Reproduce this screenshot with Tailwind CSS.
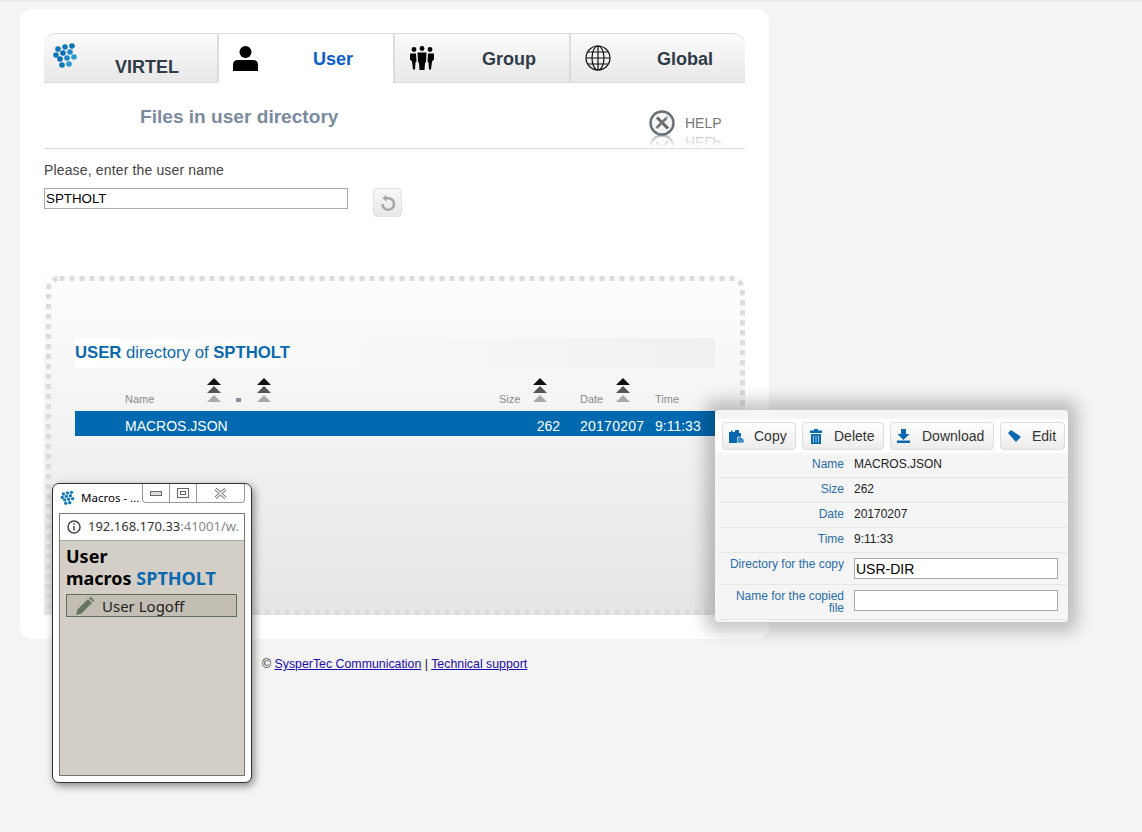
<!DOCTYPE html>
<html lang="en">

<head>
  <meta charset="UTF-8">
  <title>Files in user directory</title>
  <script src="https://cdn.jsdelivr.net/npm/@tailwindcss/browser@4"></script>
</head>

<body class="relative h-[832px] w-[1142px] overflow-hidden bg-[#f4f4f4] font-['Liberation_Sans',sans-serif] text-[#333]">
  <div class="h-[2px] bg-[#ececec]"></div>

  <!-- Main card -->
  <main class="ml-[20px] mt-[7px] h-[630px] w-[749px] rounded-[12px] bg-white px-[24px] pt-[24px]">
    <!-- Tabs -->
    <nav class="flex h-[50px] w-[701px] text-[18px] font-bold leading-[20px] text-[#2f3b47]">
      <div class="flex w-[175px] rounded-tl-[12px] border-t border-r-2 border-b border-[#dcdcdc] bg-gradient-to-b from-[#fbfbfb] to-[#e8e8e8] pl-[8px]">
        <svg class="mt-[8px] h-[26px] w-[26px] blur-[0.5px]" viewBox="0 0 26 26">
          <circle cx="6" cy="7" r="2.800" fill="#0f76b8"/><circle cx="13" cy="5" r="2.800" fill="#0f76b8"/><circle cx="20" cy="4" r="2.800" fill="#0f76b8"/>
          <circle cx="4" cy="13" r="2.800" fill="#0f76b8"/><circle cx="11" cy="11" r="2.800" fill="#0a6cb5"/><circle cx="18" cy="10" r="2.800" fill="#1c86c8"/>
          <circle cx="8" cy="17" r="2.800" fill="#0a6cb5"/><circle cx="15" cy="16" r="2.800" fill="#1c86c8"/><circle cx="22" cy="15" r="2.800" fill="#2a9ad6"/>
          <circle cx="10" cy="23" r="2.800" fill="#0f76b8"/><circle cx="17" cy="22" r="2.800" fill="#2a9ad6"/>
        </svg>
        <span class="ml-[37px] mt-[23px]">VIRTEL</span>
      </div>
      <div class="flex w-[174px] border-t border-[#dcdcdc] bg-white pl-[14px]">
        <svg class="mt-[12px] h-[25px] w-[25px]" viewBox="0 0 25 25" fill="#000">
          <circle cx="12.500" cy="6" r="6"/><path d="M0 25v-6q0-5 5-5h15q5 0 5 5v6z"/>
        </svg>
        <span class="ml-[55px] mt-[15px] text-[#0b5ec9]">User</span>
      </div>
      <div class="flex w-[178px] border-t border-l-2 border-r-2 border-b border-[#dcdcdc] bg-gradient-to-b from-[#fbfbfb] to-[#e8e8e8] pl-[15px]">
        <svg class="mt-[12px] h-[24px] w-[24px]" viewBox="0 0 24 24" fill="#000">
          <circle cx="4" cy="3.500" r="2.400"/><circle cx="12" cy="2.500" r="2.400"/><circle cx="20" cy="3.500" r="2.400"/>
          <path d="M0 7.500h6l.5 8-1 1-.5 7H3l-1-8-2-2z"/><path d="M24 7.500h-6l-.5 8 1 1 .5 7h2l1-8 2-2z"/>
          <path d="M7.500 6.500h9l-.5 9-1 2-.5 6.500h-5L9 17.500l-1-2z"/>
        </svg>
        <span class="ml-[48px] mt-[15px]">Group</span>
      </div>
      <div class="flex w-[174px] rounded-tr-[12px] border-t border-b border-[#dcdcdc] bg-gradient-to-b from-[#fbfbfb] to-[#e8e8e8] pl-[14px]">
        <svg class="mt-[11px] h-[26px] w-[26px]" viewBox="0 0 26 26" fill="none" stroke="#111" stroke-width="1.200">
          <circle cx="13" cy="13" r="12"/><ellipse cx="13" cy="13" rx="6" ry="12"/>
          <path d="M13 1v24M1 13h24M3 7h20M3 19h20"/>
        </svg>
        <span class="ml-[46px] mt-[15px]">Global</span>
      </div>
    </nav>

    <!-- Heading -->
    <header class="relative flex h-[66px] w-[701px] border-b border-[#dcdcdc] pl-[96px]">
      <h1 class="mt-[22px] text-[19.1px] font-bold leading-[24px] text-[#7a8b9e]">Files in user directory</h1>
      <a class="absolute left-[605px] top-[27px] flex h-[26px] items-center text-[14px] text-[#777]">
        <svg class="h-[26px] w-[26px]" viewBox="0 0 26 26" fill="none">
          <circle cx="13" cy="13" r="11.500" fill="#f4f4f4" stroke="#666e76" stroke-width="2.400"/>
          <path d="M8 7.500l11 11" stroke="#666" stroke-width="3"/><path d="M18.500 7L7.500 18" stroke="#777" stroke-width="2.600"/><path d="M15.500 5.500l5 5" stroke="#fff" stroke-width="1"/>
        </svg>
        <span class="ml-[10px]">HELP</span>
      </a>
      <div aria-hidden="true" class="absolute left-[605px] top-[51px] h-[14px] overflow-hidden opacity-50 [mask-image:linear-gradient(to_bottom,black,transparent)]">
        <div class="flex h-[26px] -scale-y-100 items-center text-[14px] text-[#777]">
          <svg class="h-[26px] w-[26px]" viewBox="0 0 26 26" fill="none">
            <circle cx="13" cy="13" r="11.500" stroke="#666e76" stroke-width="2.400"/>
            <path d="M8 7.500l11 11" stroke="#666" stroke-width="3"/><path d="M18.500 7L7.500 18" stroke="#777" stroke-width="2.600"/>
          </svg>
          <span class="ml-[10px] translate-y-[5px]">HELP</span>
        </div>
      </div>
    </header>

    <!-- User name form -->
    <p class="mt-[13px] text-[14px] leading-[16px] tracking-[0.15px] text-[#444]">Please, enter the user name</p>
    <div class="mt-[10px] flex items-start">
      <input class="h-[21px] w-[304px] border border-[#a9a9a9] bg-white px-[1px] text-[13.33px] text-black" value="SPTHOLT">
      <button class="ml-[25px] flex h-[29px] w-[29px] items-center justify-center rounded-[4px] border border-[#e2e2e2] bg-gradient-to-b from-[#f8f8f8] to-[#e8e8e8]">
        <svg class="h-[18px] w-[18px]" viewBox="0 0 18 18" fill="none" stroke="#a8a8a8" stroke-width="2.600">
          <path d="M6 4.200h3.500a5.800 5.800 0 1 1-6 5.800"/><path d="M7.500 0.500L3.500 4.200l4 3.700z" fill="#a8a8a8" stroke="none"/>
        </svg>
      </button>
    </div>

    <!-- Directory box -->
    <section class="relative mt-[59px] h-[339px] w-[701px] bg-gradient-to-b from-[#fdfdfd] to-[#e6e6e6] pl-[31px] pt-[62px]">
      <svg class="absolute left-0 top-0 h-[339px] w-[701px]" viewBox="0 0 701 339" fill="none">
        <rect x="4.500" y="2.500" width="694" height="334" rx="11" stroke="#dcdcdc" stroke-width="5" stroke-dasharray="5 5"/>
      </svg>
      <h2 class="relative h-[30px] w-[640px] bg-gradient-to-r from-white to-[#f0f0f0] text-[16.7px] leading-[29px] text-[#0a68ae]">
        <b>USER</b> directory of <b>SPTHOLT</b>
      </h2>

      <div class="relative mt-[10px] flex h-[28px] w-[640px] items-end pl-[50px] text-[11px] leading-[14px] text-[#8a8a8a]">
        <span class="w-[82px]">Name</span>
        <span class="mb-[4px] flex w-[29px] flex-col">
          <svg class="h-[24px] w-[14px]" viewBox="0 0 14 24"><path d="M7 0l7 7H0z" fill="#111"/><path d="M7 8l7 7H0z" fill="#555"/><path d="M7 17l7 7H0z" fill="#aaa"/></svg>
        </span>
        <span class="mb-[4px] w-[21px]"><span class="block h-[4px] w-[5px] bg-[#7f8ea3]"></span></span>
        <span class="mb-[4px] w-[242px]">
          <svg class="h-[24px] w-[14px]" viewBox="0 0 14 24"><path d="M7 0l7 7H0z" fill="#111"/><path d="M7 8l7 7H0z" fill="#555"/><path d="M7 17l7 7H0z" fill="#aaa"/></svg>
        </span>
        <span class="w-[34px]">Size</span>
        <span class="mb-[4px] w-[47px]">
          <svg class="h-[24px] w-[14px]" viewBox="0 0 14 24"><path d="M7 0l7 7H0z" fill="#111"/><path d="M7 8l7 7H0z" fill="#555"/><path d="M7 17l7 7H0z" fill="#aaa"/></svg>
        </span>
        <span class="w-[36px]">Date</span>
        <span class="mb-[4px] w-[39px]">
          <svg class="h-[24px] w-[14px]" viewBox="0 0 14 24"><path d="M7 0l7 7H0z" fill="#111"/><path d="M7 8l7 7H0z" fill="#555"/><path d="M7 17l7 7H0z" fill="#aaa"/></svg>
        </span>
        <span>Time</span>
      </div>

      <div class="relative mt-[5px] flex h-[25px] w-[640px] bg-[#0069b0] pl-[50px] pt-[3px] text-[14px] leading-[25px] text-white">
        <span class="w-[375px]">MACROS.JSON</span>
        <span class="w-[60px] text-right">262</span>
        <span class="ml-[20px] w-[75px] tracking-[0.25px]">20170207</span>
        <span>9:11:33</span>
      </div>
    </section>
  </main>

  <footer class="ml-[262px] mt-[18px] text-[12.35px] leading-[14px] text-[#222]">
    © <a class="text-[#1a0dab] underline">SysperTec Communication</a> | <a class="text-[#1a0dab] underline">Technical support</a>
  </footer>

  <!-- File detail panel -->
  <aside class="absolute left-[715px] top-[410px] h-[212px] w-[353px] rounded-[4px] bg-[#f5f5f5] pt-[9px] shadow-[0_0_16px_10px_rgba(0,0,0,0.22)]">
    <div class="flex h-[34px] gap-[6px] bg-white pl-[7px] pt-[3px] text-[14px] text-[#333]">
      <button class="flex h-[28px] w-[74px] items-center rounded-[4px] border border-[#dcdcdc] bg-gradient-to-b from-white to-[#ececec] pl-[6px]">
        <svg class="h-[13px] w-[15px]" viewBox="0 0 15 13">
          <path d="M0 2h2V0.500h1.500V2H6V0h4v3h2v4H9v6H0z" fill="#0a68ae"/><path d="M8.500 7H12l3 2.500V13H8.500z" fill="#3a8cc8" stroke="#fff" stroke-width=".6"/>
        </svg>
        <span class="ml-[10px] mt-[1px]">Copy</span>
      </button>
      <button class="flex h-[28px] w-[82px] items-center rounded-[4px] border border-[#dcdcdc] bg-gradient-to-b from-white to-[#ececec] pl-[7px]">
        <svg class="h-[15px] w-[12px]" viewBox="0 0 12 15" fill="#0a68ae"><path d="M0 1.500h4V0h4v1.500h4V4H0z"/><path d="M1 5h10v10H1z"/><path d="M3.500 6.500v7M6 6.500v7M8.500 6.500v7" stroke="#9cc4e2" stroke-width="1"/></svg>
        <span class="ml-[12px] mt-[1px]">Delete</span>
      </button>
      <button class="flex h-[28px] w-[104px] items-center rounded-[4px] border border-[#dcdcdc] bg-gradient-to-b from-white to-[#ececec] pl-[6px]">
        <svg class="h-[14px] w-[13px]" viewBox="0 0 13 14" fill="#0a68ae"><path d="M4 0h5v5h3.500l-6 6-6-6H4z"/><path d="M0 11.500h13V14H0z"/></svg>
        <span class="ml-[12px] mt-[1px]">Download</span>
      </button>
      <button class="flex h-[28px] w-[65px] items-center rounded-[4px] border border-[#dcdcdc] bg-gradient-to-b from-white to-[#ececec] pl-[7px]">
        <svg class="h-[12px] w-[13px]" viewBox="0 0 13 12" fill="#0a68ae"><path d="M0 3l3-3 9 6q1 1 0 2l-3 3q-1 1-2 0z"/></svg>
        <span class="ml-[11px] mt-[1px]">Edit</span>
      </button>
    </div>
    <dl class="ml-[4px] text-[12px] leading-[14px]">
      <div class="flex h-[25px] items-center border-b border-[#e6e6e6] pb-[2px]">
        <dt class="w-[125px] text-right text-[#2a6ca8]">Name</dt><dd class="ml-[10px] text-[#222]">MACROS.JSON</dd>
      </div>
      <div class="flex h-[25px] items-center border-b border-[#e6e6e6] pb-[2px]">
        <dt class="w-[125px] text-right text-[#2a6ca8]">Size</dt><dd class="ml-[10px] text-[#222]">262</dd>
      </div>
      <div class="flex h-[25px] items-center border-b border-[#e6e6e6] pb-[2px]">
        <dt class="w-[125px] text-right text-[#2a6ca8]">Date</dt><dd class="ml-[10px] text-[#222]">20170207</dd>
      </div>
      <div class="flex h-[25px] items-center border-b border-[#e6e6e6] pb-[2px]">
        <dt class="w-[125px] text-right text-[#2a6ca8]">Time</dt><dd class="ml-[10px] text-[#222]">9:11:33</dd>
      </div>
      <div class="flex h-[32px] items-start border-b border-[#e6e6e6] pt-[5px]">
        <dt class="-mt-[1px] w-[125px] text-right text-[#2a6ca8]">Directory for the copy</dt>
        <dd class="ml-[10px]"><input class="h-[21px] w-[204px] border border-[#a9a9a9] bg-white px-[1px] text-[14px] text-black" value="USR-DIR"></dd>
      </div>
      <div class="flex h-[35px] items-start border-b border-[#e6e6e6] pt-[5px]">
        <dt class="w-[125px] pl-[6px] text-right leading-[12px] text-[#2a6ca8]">Name for the copied file</dt>
        <dd class="ml-[10px]"><input class="h-[21px] w-[204px] border border-[#a9a9a9] bg-white px-[1px] text-[14px] text-black" value=""></dd>
      </div>
    </dl>
  </aside>

  <!-- Popup window -->
  <div class="absolute left-[52px] top-[483px] h-[300px] w-[200px] rounded-[7px] border border-[#333] bg-white shadow-[2px_3px_8px_rgba(0,0,0,0.45)]">
    <div class="relative flex h-[29px] items-start pl-[7px] pt-[6px] font-['Noto_Sans',sans-serif] text-[11.5px] leading-[16px] text-black">
      <svg class="h-[15px] w-[15px] blur-[0.2px]" viewBox="0 0 26 26" fill="#1478bc">
        <circle cx="6" cy="7" r="2.900"/><circle cx="13" cy="5" r="2.900"/><circle cx="20" cy="4" r="2.900"/>
        <circle cx="4" cy="13" r="2.900"/><circle cx="11" cy="11" r="2.900"/><circle cx="18" cy="10" r="2.900"/>
        <circle cx="8" cy="17" r="2.900"/><circle cx="15" cy="16" r="2.900"/><circle cx="22" cy="15" r="2.900"/>
        <circle cx="10" cy="23" r="2.900"/><circle cx="17" cy="22" r="2.900"/>
      </svg>
      <span class="ml-[6px] whitespace-nowrap">Macros - ...</span>
      <div class="absolute left-[89px] top-0 flex h-[19px] w-[103px] rounded-b-[4px] border-x border-b border-[#999] bg-white">
        <span class="flex w-[27px] items-center justify-center border-r border-[#999]"><span class="block h-[5px] w-[12px] border border-[#666] bg-[#ddd]"></span></span>
        <span class="flex w-[27px] items-center justify-center border-r border-[#999]"><span class="flex h-[10px] w-[12px] items-center justify-center border border-[#666]"><span class="block h-[4px] w-[6px] border border-[#666]"></span></span></span>
        <span class="flex flex-1 items-center justify-center">
          <svg class="h-[11px] w-[13px]" viewBox="0 0 13 11" fill="none">
            <path d="M1.500 1l10 9M11.500 1l-10 9" stroke="#777" stroke-width="3.200"/><path d="M1.500 1l10 9M11.500 1l-10 9" stroke="#fff" stroke-width="1.300"/>
          </svg>
        </span>
      </div>
    </div>
    <div class="ml-[6px] flex h-[263px] w-[186px] flex-col border border-[#777] bg-[#d3cfc7]">
      <div class="flex h-[27px] flex-none items-center overflow-hidden whitespace-nowrap border-b border-[#aaa] bg-white pl-[7px] font-['Noto_Sans',sans-serif] text-[13px] text-[#333]">
        <svg class="h-[14px] w-[14px] flex-none" viewBox="0 0 14 14" fill="none" stroke="#444" stroke-width="1.500"><circle cx="7" cy="7" r="6"/><path d="M7 6v4.500M7 3.200v1.600"/></svg>
        <span class="ml-[7px]">192.168.170.33<span class="text-[#888]">:41001/w.</span></span>
      </div>
      <div class="px-[6px] pt-[4px] font-['Noto_Sans',sans-serif]">
        <p class="text-[18px] font-bold leading-[22px] text-black">User<br>macros <span class="text-[#0a68ae]">SPTHOLT</span></p>
        <button class="mt-[5px] flex h-[23px] w-[171px] items-center border border-[#5f6f5a] bg-[#c2beb4] pl-[9px] text-[15px] text-[#222]">
          <svg class="h-[18px] w-[18px]" viewBox="0 0 18 18" fill="#66755f"><path d="M0 18l1.500-5.500L12 2l4 4L5.500 16.500z"/><path d="M13 1l1-1q1 0 2 1l1 1q1 1 1 2l-1 1z"/></svg>
          <span class="ml-[8px] mt-[1px]">User Logoff</span>
        </button>
      </div>
    </div>
  </div>
</body>

</html>
